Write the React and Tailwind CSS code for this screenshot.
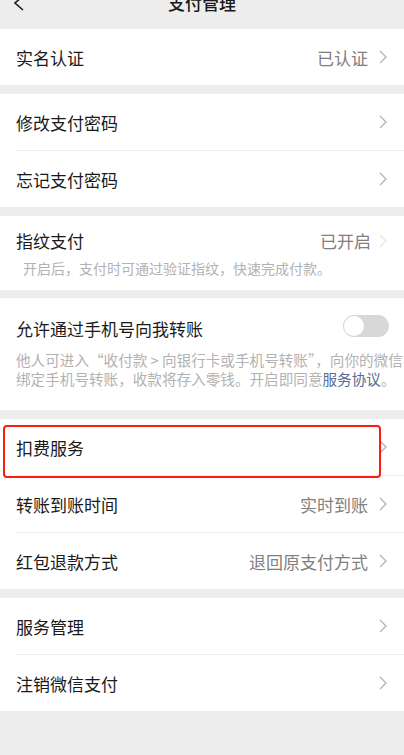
import React from 'react';

const Chevron = ({ faint }) => (
  <svg width="8" height="14" viewBox="0 0 8 14" className={faint ? 'text-[#e6e6e6]' : 'text-[#b2b2b2]'}>
    <path d="M1 1 L7 7 L1 13" fill="none" stroke="currentColor" strokeWidth="1.3" />
  </svg>
);

const Row = ({ label, value, faint }) => (
  <div className="h-[56px] flex items-center justify-between pl-4 pr-[17px]">
    <span className="text-[17px] text-[#1a1a1a] translate-y-[1px]">{label}</span>
    <div className="flex items-center gap-[11px]">
      {value && <span className="text-[17px] text-[#808080] translate-y-[1px]">{value}</span>}
      <Chevron faint={faint} />
    </div>
  </div>
);

const Divider = () => <div className="ml-4 h-px bg-[#ececec]" />;

const Section = ({ children }) => <div className="bg-white">{children}</div>;

export default function App() {
  return (
    <div
      className="w-[404px] h-[755px] overflow-hidden bg-[#ededed]"
      style={{ fontFamily: '"Noto Sans CJK SC", "Noto Sans", sans-serif' }}
    >
      {/* Header (cut off at top) */}
      <div className="h-[29px] flex justify-between items-start">
        <svg width="12" height="16" viewBox="0 0 12 16" className="ml-[13px] -mt-[5px] text-[#1a1a1a]">
          <path d="M10 1 L2 8 L10 15" fill="none" stroke="currentColor" strokeWidth="1.6" />
        </svg>
        <span className="text-[17px] leading-none -mt-[6px] text-[#1a1a1a] font-medium">支付管理</span>
        <span className="w-[25px]" />
      </div>

      <Section>
        <Row label="实名认证" value="已认证" />
      </Section>

      <div className="h-[9px]" />
      <Section>
        <Row label="修改支付密码" />
        <Divider />
        <Row label="忘记支付密码" />
      </Section>

      <div className="h-[9px]" />
      <Section>
        <div className="pt-[13px] pb-[12px]">
          <div className="h-[24px] flex items-center justify-between pl-4 pr-[17px]">
            <span className="text-[17px] text-[#1a1a1a]">指纹支付</span>
            <div className="flex items-center gap-[8px]">
              <span className="text-[17px] text-[#808080]">已开启</span>
              <Chevron faint />
            </div>
          </div>
          <p className="mt-[6px] pl-[23px] text-[14px] leading-[19px] text-[#b2b2b2]">
            开启后，支付时可通过验证指纹，快速完成付款。
          </p>
        </div>
      </Section>

      <div className="h-[8px]" />
      <Section>
        <div className="pt-[19px] pb-[22px]">
          <div className="h-[24px] flex items-center justify-between pl-4 pr-[15px]">
            <span className="text-[17px] text-[#1a1a1a]">允许通过手机号向我转账</span>
            <div className="w-[46px] h-[22px] rounded-full bg-[#d8d8d8] p-[1px] flex items-center -mt-[7px]">
              <div className="w-[20px] h-[20px] rounded-full bg-white" />
            </div>
          </div>
          <p className="mt-[9px] pl-4 text-[14.6px] leading-[19px] text-[#b2b2b2] whitespace-nowrap">
            他人可进入“收付款 &gt; 向银行卡或手机号转账”，向你的微信
            <br />
            绑定手机号转账，收款将存入零钱。开启即同意<span className="text-[#576b95]">服务协议</span>。
          </p>
        </div>
      </Section>

      <div className="h-[9px]" />
      <Section>
        <div className="relative">
          <Row label="扣费服务" />
          <div className="absolute left-[3px] top-[6px] w-[378px] h-[53px] border-[2.5px] border-[#ff1a12] rounded-[4px]" />
        </div>
        <Divider />
        <Row label="转账到账时间" value="实时到账" />
        <Divider />
        <Row label="红包退款方式" value="退回原支付方式" />
      </Section>

      <div className="h-[9px]" />
      <Section>
        <Row label="服务管理" />
        <Divider />
        <Row label="注销微信支付" />
      </Section>
    </div>
  );
}
